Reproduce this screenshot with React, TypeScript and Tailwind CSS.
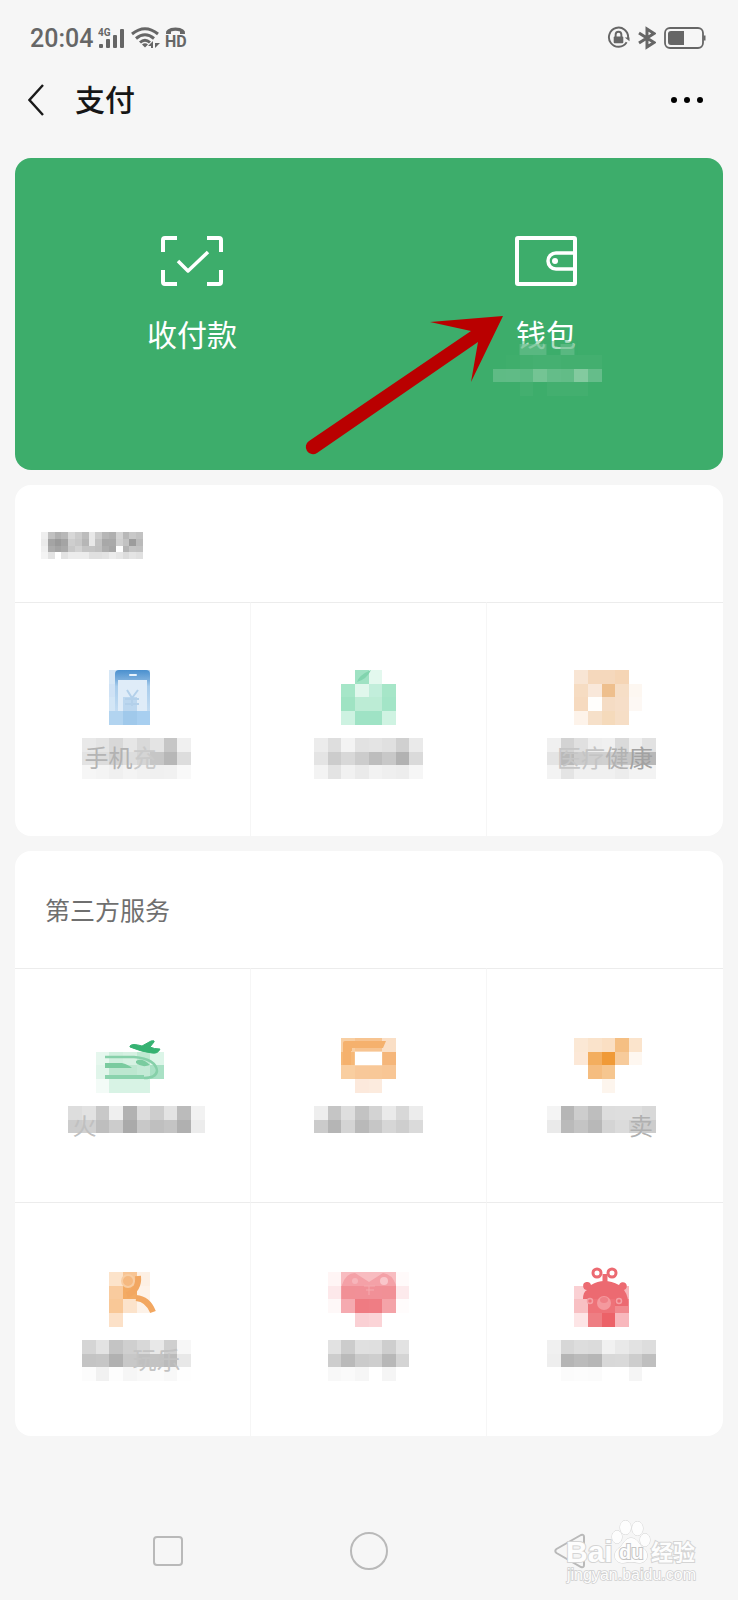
import type { ReactNode } from 'react'

// 马赛克方格边长：8 格正好 109px
const CELL = 109 / 8

interface MosaicProps {
  rows: string[]
  col?: number
  size?: number
}

// 每行是空格分隔的颜色：两位为灰度，六位为十六进制色，-- 为空
function Mosaic({ rows, col = 0, size = CELL }: MosaicProps) {
  return (
    <g shapeRendering="crispEdges">
      {rows.map((row, y) =>
        row.split(' ').map((c, x) =>
          c === '--' ? null : (
            <rect
              key={`${x}-${y}`}
              x={(x + col) * size}
              y={y * size}
              width={size}
              height={size}
              fill={c.length === 2 ? `#${c}${c}${c}` : `#${c}`}
            />
          ),
        ),
      )}
    </g>
  )
}

interface Service {
  name: string
  icon: ReactNode
  mask: string[]
  maskCol?: number
  text?: ReactNode
}

const TENCENT: Service[] = [
  {
    name: '手机充值',
    icon: (
      <>
        <defs>
          <linearGradient id="phone" x1="0" y1="0" x2="0" y2="1">
            <stop offset="0" stopColor="#4a90cf" />
            <stop offset="0.25" stopColor="#7fb1de" />
            <stop offset="0.4" stopColor="#a9cdec" />
            <stop offset="1" stopColor="#c3dcf2" />
          </linearGradient>
        </defs>
        <Mosaic col={2} rows={['d6e7f6 b9d6f0 b9d6f0', 'cfe2f5 dceaf7 dceaf7', 'd3e6f6 c9def2 d3e6f6', 'b2d4f0 a0c9eb a8cff0']} />
        <path d="M33 41V4Q33 0 37 0H64Q68 0 68 4V41Z" fill="url(#phone)" />
        <rect x="36" y="10" width="29" height="31" fill="#dfecf8" />
        <rect x="41" y="27" width="14" height="14" fill="#bcd7ef" />
        <rect x="47" y="4" width="8" height="2" rx="1" fill="#e8f3fc" />
        <path d="M45 20l5 8 6-8M43 29h14M43 34h14M50 28v8" stroke="#b3d0ea" strokeWidth="2" fill="none" />
      </>
    ),
    mask: ['e9 e4 d8 e6 d9 e4 c6 f0', 'e3 dd d2 dd d5 c6 b7 dd', 'f6 f4 f0 f4 f1 f0 f1 f9'],
    text: (
      <>
        <span className="text-[#b4b4b4]">手</span>
        <span className="text-[#b2b2b2]">机</span>
        <span className="text-[#cacaca]">充</span>
      </>
    ),
  },
  {
    name: '生活缴费',
    icon: (
      <>
        <Mosaic col={2} rows={['-- 9fe2c3 e3f8ee --', 'a6e6c8 e0f7ec c2eedb a6e6c8', '9fe3c3 bcecd5 bcecd5 a3e5c7', 'cdf2e1 9fe3c5 9fe3c5 cff3e2']} />
        <path d="M43 12Q45 5 57 0Q53 9 43 12Z" fill="#82d4ae" />
      </>
    ),
    mask: ['ec de f3 e2 e4 e0 d0 ea', 'e4 cc d8 cc bd c8 b2 da', 'f3 e3 f1 ea f2 ef ed f6'],
  },
  {
    name: '医疗健康',
    icon: (
      <Mosaic
        col={2}
        rows={['f8e5d4 f5d8bc f5d8bc f5d5b5 --', 'f6dcc2 f9e8da eebf8d f6dec6 fdf7f1', 'f6dabf fffefc f5dcc4 f6dec8 fdf8f4', 'fdf3ea f6e0c9 f5dabb f6dec6 --']}
      />
    ),
    mask: ['f0 d3 e0 ee f0 da ef e2', 'e4 b9 cc cf d0 c6 c6 b8', 'f3 e4 f0 f0 f0 ec f3 f3'],
    text: (
      <>
        <span className="text-[#c6c6c6]">医</span>
        <span className="text-[#c4c4c4]">疗</span>
        <span className="text-[#b2b2b2]">健</span>
        <span className="text-[#a2a2a2]">康</span>
      </>
    ),
  },
]

const THIRD_PARTY: Service[] = [
  {
    name: '火车票机票',
    icon: (
      <>
        <Mosaic col={1} rows={['-- -- -- -- --', 'e6f7ee d0efde d6f1e2 bfe9d2 dcf5e8', 'e0f5ea bde7d0 bde7d0 c4ead6 a9e1c5', 'f3fbf7 d8f3e5 d8f3e5 d8f3e5 --']} />
        <path d="M48 8Q50 5 60 8L69 3Q73 2 72 4L68 9Q72 11 78 11Q76 16 70 15Q60 14 48 9Z" fill="#36b272" stroke="#36b272" />
        <path d="M23 19H52Q74 21 75 33Q74 40 62 40" stroke="#86d0a9" strokeWidth="2.5" fill="none" />
        <path d="M23 37H62V41H23Z" fill="#8ad3ad" />
        <path d="M54 23Q60 19 68 27Q60 30 54 25ZM23 25H40Q47 27 50 30H23Z" fill="#7acb9f" />
      </>
    ),
    mask: ['dd e2 c8 ef b2 dc cd e3 bb f2', 'cc d0 be cc aa c8 bf c4 b0 ec'],
    maskCol: -1,
    text: <span className="-ml-3 text-[#c0c0c0]">火</span>,
  },
  {
    name: '滴滴出行',
    icon: (
      <>
        <Mosaic col={2} rows={['f8cfa3 f7c491 f7c491 fadfc6', 'f6b877 -- -- f5b67a', 'f9cea0 f8c899 f8c898 f8c695', '-- fce9dc fcebde --']} />
        <path d="M29 27V5Q29 3 31 3H72L69 10H38V13H37V27Z" fill="#f5b16d" />
        <rect x="40.875" y="13.625" width="27.25" height="13.625" fill="white" />
      </>
    ),
    mask: ['ee c5 de c3 d3 ea d8 ec', 'cb b5 d4 b9 c6 d6 ce da'],
  },
  {
    name: '美团外卖',
    icon: (
      <Mosaic
        col={2}
        rows={['fbe8d5 fae3cb fadfc3 f5bf83 fbe4cc', 'fce8d7 f3ae5f f09a37 f7cb9b fef7f0', '-- f5bd80 f6c68f -- --', '-- -- fdf5ed -- --']}
      />
    ),
    mask: ['f4 b6 cd be dd de de d8', 'ea ba c4 b8 d4 db d0 cc'],
    text: <span className="ml-auto text-[#b0b0b0]">卖</span>,
  },
  {
    name: '吃喝玩乐',
    icon: (
      <>
        <Mosaic col={2} rows={['fce3ca f8c594 fdf0e4', 'f9cb9e f3ab64 fef3e9', 'f9c897 fce3cb fdf2e8', 'fce1c8 -- --']} />
        <circle cx="46" cy="9" r="6" fill="#f5b980" stroke="#f8cda2" strokeWidth="2" />
        <path d="M56 4C57 13 53 20 45 23M54 26Q66 27 71 40" stroke="#f2a761" strokeWidth="6" fill="none" />
      </>
    ),
    mask: ['d5 e3 c4 cf d8 e8 cf f7', 'c4 c6 b1 c8 c0 c3 bb e8', 'fc f1 fd f6 f9 fb f8 fe'],
    text: (
      <>
        <span className="ml-auto text-[#c4c4c4]">玩</span>
        <span className="text-[#c2c2c2]">乐</span>
      </>
    ),
  },
  {
    name: '蘑菇街',
    icon: (
      <>
        <Mosaic col={1} rows={['fff5f5 f8bcc0 f8bcc0 f8bcc0 f8bcc0 fffafa', 'fde8ea f29a9f f29ba0 f29ba0 f29a9f fdeaec', 'fef8f8 f5aab0 ef7b82 ef7d84 f4a3a8 fffcfc', '-- -- fad0d4 fbd4d7 -- --']} />
        <path d="M28 13Q32 1 41 1L55 10L69 1Q78 2 82 13V27H28Z" fill="#f0868d" opacity="0.5" />
        <circle cx="41" cy="9" r="3" fill="#f7b5ba" />
        <circle cx="70" cy="9" r="4" fill="#f9c6ca" />
        <path d="M50 14h11M52 18h8M55 14v9" stroke="#f5aaaf" fill="none" />
      </>
    ),
    mask: ['e2 cc e0 df ce e2', 'cd ba cb ce b8 d4', 'f8 fa f6 ff f5 ff'],
    maskCol: 1,
  },
  {
    name: '唯品会特卖',
    icon: (
      <>
        <Mosaic col={2} rows={['-- -- -- --', 'fad0d3 ef7a80 ef7a80 f6b8bc', 'f8c0c3 ee7278 ee7278 f18a8f', 'fde5e6 ee7e83 ec6268 f8b8bd']} />
        <path d="M36 27Q36 20 40 18A4 4 0 1 1 44 13Q57 5 72 13A4 4 0 1 1 77 18Q82 25 81 34H68V27Z" fill="#ec6a71" />
        <path d="M58 2V10" stroke="#ec6a71" strokeWidth="5" />
        <circle cx="50" cy="1" r="4" fill="white" stroke="#ec6a71" strokeWidth="3" />
        <circle cx="65" cy="1" r="4" fill="white" stroke="#ec6a71" strokeWidth="3" />
        <circle cx="57" cy="31" r="7" fill="#f4999e" />
        <ellipse cx="57" cy="28" rx="4" ry="3" fill="#ef8087" />
        <circle cx="43" cy="29" r="2.5" fill="none" stroke="#f4a0a5" strokeWidth="1.5" />
        <circle cx="72" cy="29" r="2.5" fill="none" stroke="#f4a0a5" strokeWidth="1.5" />
      </>
    ),
    mask: ['f0 d7 dd db f1 e9 e2 dd', 'ee b5 bb b6 d8 d9 cd bf', 'ff fb fc fb ff ff f5 ff'],
  },
]

// 方格网与各列中线的偏移
const ORIGINS = [-51, -55, -58]

function Tile({ service, origin }: { service: Service; origin: number }) {
  return (
    <button type="button" aria-label={service.name} className="flex flex-col items-center gap-[14px]">
      <svg width="160" height="54" viewBox="-80 0 160 54" className="overflow-visible">
        <g transform={`translate(${origin} 0)`}>{service.icon}</g>
      </svg>
      <span className="relative flex h-[38px] w-40 items-center justify-center">
        <svg width="160" height="40" viewBox="-80 0 160 40" className="absolute left-0 top-0 overflow-visible">
          <g transform={`translate(${origin} 0)`}>
            <Mosaic rows={service.mask} col={service.maskCol} />
          </g>
        </svg>
        <span className="relative flex w-24 text-2xl leading-6">{service.text}</span>
      </span>
    </button>
  )
}

interface ServiceCardProps {
  title: ReactNode
  services: Service[]
  tilePadding: string
}

function ServiceCard({ title, services, tilePadding }: ServiceCardProps) {
  return (
    <section className="overflow-hidden rounded-2xl bg-white">
      <h2 className="flex h-[117px] items-center px-[30px] text-[25px] text-[#6f6f6f]">{title}</h2>
      <div className="grid grid-cols-3">
        {services.map((s, i) => (
          <div
            key={s.name}
            className={`flex h-[234px] items-start justify-center border-r border-t border-r-[#f6f6f6] border-t-[#ececec] nth-[3n]:border-r-0 ${tilePadding}`}
          >
            <Tile service={s} origin={ORIGINS[i % 3]} />
          </div>
        ))}
      </div>
    </section>
  )
}

function StatusBar() {
  return (
    <div className="flex h-[76px] items-center justify-between pl-[30px] pr-8 text-[#666]">
      <div className="flex items-center gap-[5px]">
        <span className="font-[Roboto,sans-serif] text-[25px] font-medium leading-none">20:04</span>
        <svg width="28" height="26" viewBox="0 -2 28 26" fill="currentColor">
          <text x="0" y="9" fontFamily="Roboto, sans-serif" fontSize="10" fontWeight="700">4G</text>
          <rect x="1" y="17" width="4" height="4" rx="1" />
          <rect x="8" y="12" width="4" height="9" rx="1" />
          <rect x="15" y="8" width="4" height="13" rx="1" />
          <rect x="22" y="2" width="4" height="19" rx="1" />
        </svg>
        <svg width="29" height="22" viewBox="0 0 29 22" fill="none" stroke="currentColor" strokeWidth="3">
          <path d="M1 7Q14 -3.500 27 7M5 11.500Q14 4 23 11.500M9 15.500Q14 11 19 15.500" />
          <path d="M11 17.500Q14 15 17 17.500L14 20.500ZM24 14V21L29 16H24ZM22 14V21H20V19H17Z" fill="currentColor" stroke="none" />
        </svg>
        <svg width="28" height="24" viewBox="0 0 28 24" fill="currentColor">
          <path d="M1 8Q0 2 10.500 1.500Q21 2 20 8H15V5.500Q10.500 4 6 5.500V8Z" />
          <text x="0" y="21" fontFamily="'Liberation Sans Narrow', Roboto, sans-serif" fontSize="16" fontWeight="700">HD</text>
        </svg>
      </div>
      <div className="flex items-center gap-2">
        <svg width="23" height="24" viewBox="0 0 24 24" fill="none" stroke="currentColor" strokeWidth="2">
          <path d="M20.500 16.500A10 10 0 1 1 22 12" />
          <path d="M18.500 11.500H23.500V15.500Z" fill="currentColor" stroke="none" />
          <rect x="7" y="10.500" width="10" height="7" rx="1" fill="currentColor" stroke="none" />
          <path d="M9 11V8.500A3 3 0 0 1 15 8.500V11" />
        </svg>
        <svg width="18" height="24" viewBox="0 0 18 24" fill="none" stroke="currentColor" strokeWidth="3">
          <path d="M1 7L16 16.500L9 21V3L16 7.500L1 17" />
        </svg>
        <svg width="42" height="22" viewBox="0 0 42 22" fill="none">
          <rect x="1" y="1" width="38" height="20" rx="5" stroke="currentColor" strokeWidth="1.800" />
          <path d="M7 4H20V18H7Q4 18 4 15V7Q4 4 7 4ZM39.500 8.500H41.500V13.500H39.500Z" fill="currentColor" />
        </svg>
      </div>
    </div>
  )
}

function Watermark() {
  return (
    <svg
      width="136"
      height="68"
      viewBox="0 0 136 68"
      className="pointer-events-none absolute right-[37px] top-4"
      fill="#fdfdfd"
      stroke="#d4d4d4"
      strokeWidth="1"
      fontFamily="'Liberation Sans', 'Noto Sans CJK SC', sans-serif"
      paintOrder="stroke"
    >
      <text x="1" y="44" fontSize="30" fontWeight="700" strokeWidth="2">Bai</text>
      <ellipse cx="52" cy="19" rx="5" ry="6.500" />
      <ellipse cx="60.500" cy="9.500" rx="5.500" ry="7" />
      <ellipse cx="72.500" cy="10.500" rx="5.500" ry="7" />
      <ellipse cx="80" cy="22" rx="5" ry="6.500" />
      <path d="M66 20C72 20 74 26 78 30C85 35 83 45 74 45Q66 43 58 45C49 45 47 35 54 30C59 26 60 20 66 20Z" />
      <text x="54" y="41" fontSize="20" fontWeight="700" stroke="#c4c4c4" strokeWidth="2">du</text>
      <text x="86" y="42" fontSize="22" fontWeight="700" strokeWidth="2">经验</text>
      <text x="2" y="62" fontSize="16" stroke="#cfcfcf" strokeWidth="1.500">jingyan.baidu.com</text>
    </svg>
  )
}

export default function App() {
  return (
    <div className="flex min-h-screen flex-col bg-[#f6f6f6] font-['Noto_Sans_CJK_SC',sans-serif]">
      <StatusBar />

      <header className="flex h-12 items-center pl-7 pr-[35px]">
        <button type="button" aria-label="返回">
          <svg width="16" height="32" viewBox="0 0 16 32" fill="none" stroke="#1a1a1a" strokeWidth="2.400">
            <path d="M15 1L1.500 16L15 31" />
          </svg>
        </button>
        <h1 className="ml-[31px] pb-1 text-[30px] font-medium leading-none text-[#161616]">支付</h1>
        <button type="button" aria-label="更多" className="ml-auto flex gap-[7px]">
          <span className="size-[6px] rounded-full bg-black" />
          <span className="size-[6px] rounded-full bg-black" />
          <span className="size-[6px] rounded-full bg-black" />
        </button>
      </header>

      <main className="flex flex-col gap-[15px] px-[15px] pt-[34px]">
        <section className="relative grid h-[312px] grid-cols-2 rounded-2xl bg-[#3dad6b] text-[30px] text-white">
          <button type="button" className="flex flex-col items-center gap-8 pt-[78px] leading-[30px]">
            <svg width="62" height="50" viewBox="0 0 62 50" fill="none" stroke="currentColor" strokeWidth="4">
              <path d="M2 16V4Q2 2 4 2H16M46 2H58Q60 2 60 4V16M60 34V46Q60 48 58 48H46M16 48H4Q2 48 2 46V34" />
              <path d="M17 25L27 35L47 16" strokeWidth="3.500" strokeLinejoin="round" />
            </svg>
            <span>收付款</span>
          </button>
          <button type="button" className="flex flex-col items-center gap-8 pt-[78px] leading-[30px]">
            <svg width="62" height="50" viewBox="0 0 62 50" fill="none" stroke="currentColor" strokeWidth="4">
              <rect x="2" y="2" width="58" height="46" rx="1" />
              <path d="M60 17H41A8 8 0 0 0 41 33H60" strokeWidth="3.500" />
              <circle cx="40" cy="25" r="3" fill="currentColor" stroke="none" />
            </svg>
            <span className="relative">
              钱包
              {/* 余额遮挡 */}
              <svg width="110" height="68" viewBox="0 0 109 68" className="absolute -left-6 top-[23px]">
                <path d="M27 0H85V14H27Z" fill="#3dad6b" opacity="0.4" />
                <path d="M27 3H54V14H27ZM68 3H82V14H68Z" fill="#6cc08f" opacity="0.6" />
                <g transform="translate(0 14)">
                  <Mosaic
                    rows={['3dad6b 3fae6c 43af6f 45b071 45b071 43af6f 43af6f 43af6f', '5fbb85 60bb86 5cba83 74c494 64bd89 62bc87 83ca9f 65bd8a', '-- -- 43af6f -- 43af6f 43af6f 43af6f --']}
                  />
                </g>
              </svg>
            </span>
          </button>
          <svg width="190" height="140" viewBox="313 316 190 140" className="pointer-events-none absolute left-[298px] top-[158px] overflow-visible">
            <path d="M503 316L430 322L471 331L309 441A7 7 0 0 0 317 453L478 342L471 382Z" fill="#b90000" />
          </svg>
        </section>

        <ServiceCard
          title={
            <svg width="102" height="28" viewBox="0 0 102 28" role="img" aria-label="腾讯服务" className="-ml-1 mt-1">
              <Mosaic
                size={6.8}
                rows={[
                  'ee c0 b0 b8 d8 cc bc e8 cc b6 b0 d4 b8 c8 c2',
                  'ea a4 9a a4 ce c8 b6 e8 c2 a8 a9 d0 c2 9c ba',
                  'ef ac a4 aa c8 d2 c4 c4 c0 ae a6 ff b4 c4 c2',
                  'f3 e3 ff e3 ec ec ec e0 e0 e3 ec e6 dc e4 e0',
                ]}
              />
            </svg>
          }
          services={TENCENT}
          tilePadding="pt-[67px]"
        />
        <ServiceCard title="第三方服务" services={THIRD_PARTY} tilePadding="pt-[69px]" />
      </main>

      <nav className="relative mt-auto grid h-[98px] grid-cols-3 place-items-center px-[67px] text-[#b9b9b9]">
        <button type="button" aria-label="最近任务" className="size-[30px] rounded-[4px] border-2 border-current" />
        <button type="button" aria-label="主屏幕" className="size-[38px] rounded-full border-2 border-current" />
        <button type="button" aria-label="返回上一页">
          <svg width="32" height="36" viewBox="0 0 32 36" fill="none" stroke="currentColor" strokeWidth="2">
            <path d="M27 2L2.500 16Q0 18 2.500 20L27 34Q30 35 30 32V4Q30 1 27 2Z" />
          </svg>
        </button>
        <Watermark />
      </nav>
    </div>
  )
}
